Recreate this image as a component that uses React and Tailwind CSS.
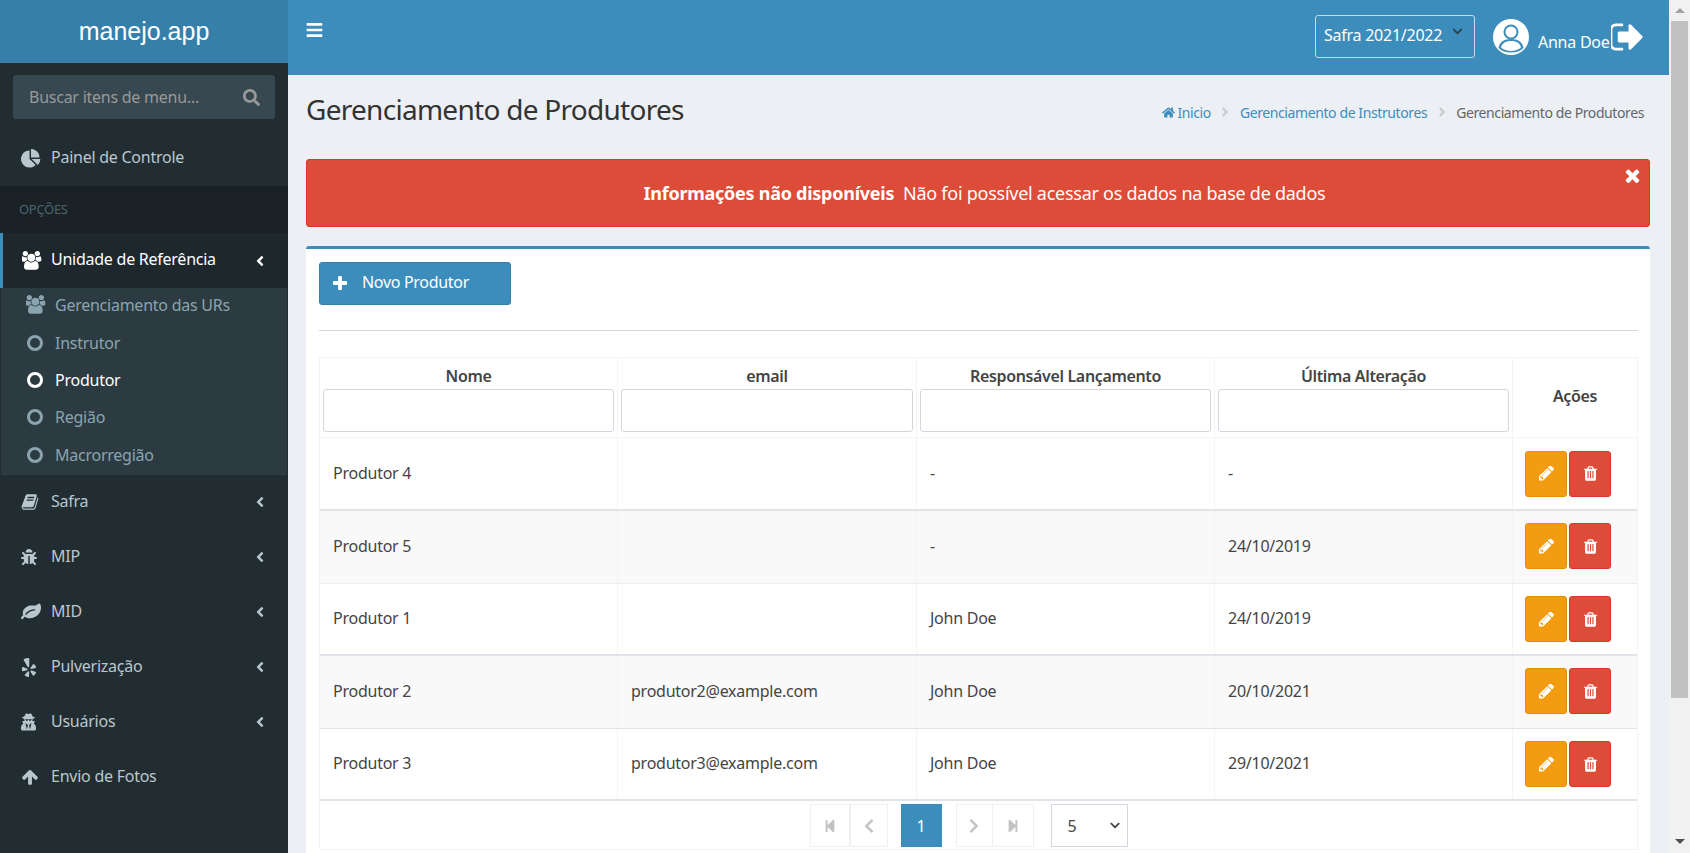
import React from "react";
import { FaBars, FaSearch, FaAngleLeft, FaBug, FaYelp, FaUserSecret, FaHome, FaAngleRight, FaChevronDown, FaChevronLeft, FaChevronRight, FaStepBackward, FaStepForward } from "react-icons/fa";

const FA = ({ d, className, box = "0 0 1792 1792" }) => (
  <svg viewBox={box} className={className} fill="currentColor"><path d={d} /></svg>
);
const bookD = "M1703 478q40 57 18 129l-275 906q-19 64-76.5 107.5t-122.5 43.5h-923q-77 0-148.5-53.5t-99.5-131.5q-24-67-2-127 0-4 3-27t4-37q1-8-3-21.5t-3-19.5q2-11 8-21t16.5-23.5 16.5-23.5q23-38 45-91.5t30-91.5q3-10 .5-30t-.5-28q3-11 17-28t17-23q21-36 42-92t25-90q1-9-2.5-32t.5-28q4-13 22-30.5t22-22.5q19-26 42.5-84.5t27.5-96.5q1-8-3-25.5t-2-26.5q2-8 9-18t18-23 17-21q8-12 16.5-30.5t15-35 16-36 19.5-32 26.5-23.5 36-11.5 47.5 5.5l-1 3q38-9 51-9h761q74 0 114 56t18 130l-274 906q-36 119-71.5 153.5t-128.5 34.5h-869q-27 0-38 15-11 16-1 43 24 70 144 70h923q29 0 56-15.5t35-41.5l300-987q7-22 5-57 38 15 59 43zm-1064 2q-4 13 2 22.5t20 9.5h608q13 0 25.5-9.5t16.5-22.5l21-64q4-13-2-22.5t-20-9.5h-608q-13 0-25.5 9.5t-16.5 22.5zm-83 256q-4 13 2 22.5t20 9.5h608q13 0 25.5-9.5t16.5-22.5l21-64q4-13-2-22.5t-20-9.5h-608q-13 0-25.5 9.5t-16.5 22.5z";
const leafD = "M1280 704q0-26-19-45t-45-19q-172 0-318 49.5t-259.5 134-235.5 219.5q-19 21-19 45 0 26 19 45t45 19q24 0 45-19 27-24 74-71t67-66q137-124 268.5-176t313.5-52q26 0 45-19t19-45zm512-198q0 95-20 193-46 224-184.5 383t-357.5 268q-214 108-438 108-148 0-286-47-15-5-88-42t-96-37q-16 0-39.5 32t-45 70-52.5 70-60 32q-43 0-63.5-17.5t-45.5-59.5q-2-4-6-11t-5.5-10-3-9.5-1.5-13.5q0-35 31-73.5t68-65.5 68-56 31-48q0-4-14-38t-16-44q-9-51-9-104 0-115 43.5-220t119-184.5 170.5-139 204-95.5q55-18 145-25.5t179.5-9 178.5-6 163.5-24 113.5-56.5l29.5-29.5 29.5-28 27-20 36.5-16 43.5-4.5q39 0 70.5 46t47.5 112 24 124 8 96z";
const trashD = "M704 1376v-704q0-14-9-23t-23-9h-64q-14 0-23 9t-9 23v704q0 14 9 23t23 9h64q14 0 23-9t9-23zm256 0v-704q0-14-9-23t-23-9h-64q-14 0-23 9t-9 23v704q0 14 9 23t23 9h64q14 0 23-9t9-23zm256 0v-704q0-14-9-23t-23-9h-64q-14 0-23 9t-9 23v704q0 14 9 23t23 9h64q14 0 23-9t9-23zm-544-992h448l-48-117q-7-9-17-11h-317q-10 2-17 11zm928 32v64q0 14-9 23t-23 9h-96v948q0 83-47 143.5t-113 60.5h-832q-66 0-113-58.5t-47-141.5v-952h-96q-14 0-23-9t-9-23v-64q0-14 9-23t23-9h309l70-167q15-37 54-63t79-26h320q40 0 79 26t54 63l70 167h309q14 0 23 9t9 23z";
const signOutD = "M704 1440q0 4 1 20t.5 26.5-3 23.5-10 19.5-20.5 6.5h-320q-119 0-203.5-84.5t-84.5-203.5v-704q0-119 84.5-203.5t203.5-84.5h320q13 0 22.5 9.5t9.5 22.5q0 4 1 20t.5 26.5-3 23.5-10 19.5-20.5 6.5h-320q-66 0-113 47t-47 113v704q0 66 47 113t113 47h312l11.5 1 11.5 3 8 5.5 7 9 2 13.5zm928-544q0 26-19 45l-544 544q-19 19-45 19t-45-19-19-45v-288h-448q-26 0-45-19t-19-45v-384q0-26 19-45t45-19h448v-288q0-26 19-45t45-19 45 19l544 544q19 19 19 45z";
const usersD = "M529 896q-162 5-265 128h-134q-82 0-138-40.500t-56-118.500q0-353 124-353 6 0 43.500 21t97.500 42.500 119 21.500q67 0 133-23-5 37-5 66 0 139 81 256zm1071 637q0 120-73 189.500t-194 69.500h-874q-121 0-194-69.500t-73-189.500q0-53 3.500-103.500t14-109 26.500-108.500 43-97.500 62-81 85.500-53.500 111.500-20q10 0 43 21.500t73 48 107 48 135 21.500 135-21.500 107-48 73-48 43-21.500q61 0 111.500 20t85.500 53.500 62 81 43 97.500 26.500 108.500 14 109 3.500 103.500zm-1024-1277q0 106-75 181t-181 75-181-75-75-181 75-181 181-75 181 75 75 181zm704 384q0 159-112.500 271.500t-271.500 112.500-271.500-112.500-112.500-271.500 112.500-271.500 271.500-112.500 271.500 112.500 112.500 271.500zm576 225q0 78-56 118.500t-138 40.500h-134q-103-123-265-128 81-117 81-256 0-29-5-66 66 23 133 23 59 0 119-21.500t97.500-42.500 43.500-21q124 0 124 353zm-128-609q0 106-75 181t-181 75-181-75-75-181 75-181 181-75 181 75 75 181z";
const pieD = "M768 890l546 546q-106 108-247.500 168t-298.500 60q-209 0-385.500-103t-279.500-279.500-103-385.500 103-385.500 279.500-279.500 385.500-103v762zm187 6h773q0 157-60 298.500t-168 247.500zm709-128h-768v-768q209 0 385.500 103t279.500 279.500 103 385.500z";
const arrowUpD = "M1675 971q0 51-37 90l-75 75q-38 38-91 38-54 0-90-38l-294-293v704q0 52-37.500 84.500t-90.500 32.500h-128q-53 0-90.500-32.500t-37.500-84.500v-704l-294 293q-36 38-90 38t-90-38l-75-75q-38-38-38-90 0-53 38-91l651-651q35-37 90-37 54 0 91 37l651 651q37 39 37 91z";
const timesD = "M1490 1322q0 40-28 68l-136 136q-28 28-68 28t-68-28l-294-294-294 294q-28 28-68 28t-68-28l-136-136q-28-28-28-68t28-68l294-294-294-294q-28-28-28-68t28-68l136-136q28-28 68-28t68 28l294 294 294-294q28-28 68-28t68 28l136 136q28 28 28 68t-28 68l-294 294 294 294q28 28 28 68z";
const plusD = "M1600 736v192q0 40-28 68t-68 28h-416v416q0 40-28 68t-68 28h-192q-40 0-68-28t-28-68v-416h-416q-40 0-68-28t-28-68v-192q0-40 28-68t68-28h416v-416q0-40 28-68t68-28h192q40 0 68 28t28 68v416h416q40 0 68 28t28 68z";
const pencilD = "M491 1536l91-91-235-235-91 91v107h128v128h107zm523-928q0-22-22-22-10 0-17 7l-542 542q-7 7-7 17 0 22 22 22 10 0 17-7l542-542q7-7 7-17zm-54-192l416 416-832 832h-416v-416zm683 96q0 53-37 90l-166 166-416-416 166-165q36-38 90-38 53 0 91 38l235 234q37 39 37 91z";

const MenuItem = ({ icon, label, arrow = true }) => (
  <div className="flex h-[55px] items-center pl-[21px] pr-[23px] text-[#b8c7ce]">
    <span className="flex w-[30px] shrink-0 items-center">{icon}</span>
    <span className="flex-1 pb-[3px] text-[16px] tracking-[-0.25px]">{label}</span>
    {arrow && <FaAngleLeft className="h-[16px] w-[10px]" />}
  </div>
);

const Sub = ({ label, active }) => (
  <div className={`flex h-[37.4px] items-center pb-[3px] pl-[26px] text-[16px] tracking-[-0.25px] ${active ? "text-white" : "text-[#8aa4af]"}`}>
    <span className={`box-border h-[16px] w-[16px] rounded-full border-[3px] ${active ? "border-white" : "border-[#8aa4af]"}`} />
    <span className="ml-[12px]">{label}</span>
  </div>
);

const Sidebar = () => (
  <aside className="flex h-full w-[288px] shrink-0 flex-col bg-[#222d32]">
    <div className="flex h-[63px] items-center justify-center bg-[#367fa9] font-['Liberation_Sans',sans-serif] text-[25px] text-white">manejo.app</div>
    <div className="px-[13px] pt-[12px]">
      <div className="flex h-[44px] items-center justify-between rounded-[3px] bg-[#374850] pl-[16px] pr-[15px] text-[16px] tracking-[-0.25px] text-[#999]">
        <span>Buscar itens de menu...</span>
        <FaSearch className="h-[17px] w-[17px]" />
      </div>
    </div>
    <div className="mt-[12px] flex h-[55px] items-center pl-[21px] text-[#b8c7ce]">
      <span className="w-[30px]"><FA d={pieD} className="h-[20px] w-[20px]" /></span>
      <span className="pb-[3px] text-[16px] tracking-[-0.25px]">Painel de Controle</span>
    </div>
    <div className="flex h-[47px] items-center bg-[#1a2226] pl-[19px] text-[13px] tracking-[-0.3px] text-[#4b646f]">OPÇÕES</div>
    <div className="flex h-[55px] items-center border-l-[3px] border-[#3c8dbc] bg-[#1e282c] pl-[19px] pr-[23px] text-white">
      <span className="w-[29px]"><FA d={usersD} box="0 128 1920 1664" className="h-[20px] w-[20px]" /></span>
      <span className="flex-1 pb-[3px] text-[16px] tracking-[-0.25px]">Unidade de Referência</span>
      <FaAngleLeft className="h-[16px] w-[10px]" />
    </div>
    <div className="mx-px bg-[#2c3b41]">
      <div className="flex h-[37.4px] items-center pb-[3px] pl-[25px] text-[16px] tracking-[-0.25px] text-[#8aa4af]">
        <FA d={usersD} box="0 128 1920 1664" className="h-[20px] w-[20px]" />
        <span className="ml-[9px]">Gerenciamento das URs</span>
      </div>
      <Sub label="Instrutor" />
      <Sub label="Produtor" active />
      <Sub label="Região" />
      <Sub label="Macrorregião" />
    </div>
    <MenuItem icon={<FA d={bookD} className="h-[18px] w-[18px]" />} label="Safra" />
    <MenuItem icon={<FaBug className="h-[16px] w-[16px]" />} label="MIP" />
    <MenuItem icon={<FA d={leafD} className="h-[20px] w-[20px]" />} label="MID" />
    <MenuItem icon={<FaYelp className="h-[19px] w-[16px]" />} label="Pulverização" />
    <MenuItem icon={<FaUserSecret className="h-[18px] w-[15px]" />} label="Usuários" />
    <MenuItem icon={<FA d={arrowUpD} className="h-[18px] w-[18px]" />} label="Envio de Fotos" arrow={false} />
  </aside>
);

const Header = () => (
  <header className="flex h-[75px] shrink-0 items-center bg-[#3c8dbc] pl-[18px] pr-[26px] text-white">
    <FaBars className="mb-[15px] h-[18px] w-[17px]" />
    <div className="flex-1" />
    <div className="mb-[3px] flex h-[43px] w-[160px] shrink-0 items-start justify-between rounded-[3px] border border-[#c9d9e4] pl-[8px] pr-[10px] pt-[7px] text-[16px] tracking-[-0.25px]">
      <span>Safra 2021/2022</span>
      <FaChevronDown className="mt-[3px] h-[11px] w-[13px] text-[#2f3f4a]" />
    </div>
    <svg viewBox="0 0 36 36" className="mb-[1px] ml-[18px] h-[36px] w-[36px] shrink-0">
      <circle cx="18" cy="18" r="18" fill="#fff" />
      <circle cx="18" cy="13" r="7.500" fill="#3c8dbc" />
      <circle cx="18" cy="13" r="5.500" fill="#fff" />
      <path d="M5.500 29c1-6 5.500-9 12.500-9s11.500 3 12.500 9c-3 3-7.500 4.500-12.500 4.500s-9.500-1.500-12.500-4.500z" fill="#3c8dbc" />
      <path d="M8 28.500c1-4 4-6.500 10-6.500s9 2.500 10 6.500c-2.500 2-6 3.500-10 3.500s-7.500-1.500-10-3.500z" fill="#fff" />
    </svg>
    <span className="ml-[9px] mt-[8px] w-[73px] shrink-0 text-[16px] tracking-[-0.25px]">Anna Doe</span>
    <FA d={signOutD} box="128 230 1520 1332" className="mb-[2px] h-[28px] w-[32px] shrink-0" />
  </header>
);

const rows = [
  ["Produtor 4", "", "-", "-", false, "h-[73px]", "border-b-2 border-[#e0e4e9]", ""],
  ["Produtor 5", "", "-", "24/10/2019", true, "h-[73px]", "border-b border-[#ecedf0]", "pb-[2px]"],
  ["Produtor 1", "", "John Doe", "24/10/2019", false, "h-[72px]", "border-b-2 border-[#e0e4e9]", ""],
  ["Produtor 2", "produtor2@example.com", "John Doe", "20/10/2021", true, "h-[73px]", "border-b border-[#e0e4e9]", "pb-[2px]"],
  ["Produtor 3", "produtor3@example.com", "John Doe", "29/10/2021", false, "h-[72px]", "border-b-2 border-[#e0e4e9]", ""],
];

const cols = "grid grid-cols-[298px_299px_298px_298px_1fr]";

const Head = ({ label }) => (
  <div className="flex flex-col items-center border-r border-[#f4f4f4] px-[3px]">
    <div className="mt-[6px] h-[25px] text-[16px] font-semibold tracking-[-0.35px] text-[#444]">{label}</div>
    <div className="h-[43px] w-full rounded-[3px] border border-[#d2d6de] bg-white" />
  </div>
);

const Table = () => (
  <div className="mt-[26px] border-x border-[#f4f4f4]">
    <div className={`${cols} h-[81px] border-y border-[#f4f4f4]`}>
      <Head label="Nome" />
      <Head label="email" />
      <Head label="Responsável Lançamento" />
      <Head label="Última Alteração" />
      <div className="flex items-center justify-center pb-[3px] text-[16px] font-semibold tracking-[-0.35px] text-[#444]">Ações</div>
    </div>
    {rows.map((r) => (
      <div key={r[0]} className={`${cols} ${r[5]} ${r[6]} ${r[4] ? "bg-[#f9f9f9]" : "bg-white"} text-[16px] tracking-[-0.25px] text-[#444]`}>
        {[r[0], r[1], r[2], r[3]].map((c, i) => (
          <div key={i} className="flex items-center border-r border-[#f4f4f4] pb-[2px] pl-[13px]">{c}</div>
        ))}
        <div className={`flex items-center pl-[12px] ${r[7]}`}>
          <div className="flex h-[46px] w-[42px] items-center justify-center rounded-[3px] border border-[#e08e0b] bg-[#f39c12] text-white"><FA d={pencilD} box="128 200 1516 1516" className="h-[15px] w-[15px]" /></div>
          <div className="ml-[2px] flex h-[46px] w-[42px] items-center justify-center rounded-[3px] border border-[#d73925] bg-[#dd4b39] text-white"><FA d={trashD} className="h-[17px] w-[17px]" /></div>
        </div>
      </div>
    ))}
    <div className="flex h-[49px] items-center justify-center border-b border-[#f4f4f4] pt-[1px]">
      <div className="mr-[20px] flex h-[43px] text-[#c3c3c3]">
        <div className="flex w-[41px] items-center justify-center border border-r-2 border-[#f0f0f3]"><FaStepBackward className="h-[14px] w-[14px]" /></div>
        <div className="flex w-[37px] items-center justify-center border border-l-0 border-[#f0f0f3]"><FaChevronLeft className="h-[16px] w-[16px]" /></div>
        <div className="ml-[13px] flex w-[41px] items-center justify-center bg-[#3c8dbc] text-[16px] text-white">1</div>
        <div className="ml-[14px] flex w-[37px] items-center justify-center border border-[#f0f0f3]"><FaChevronRight className="h-[16px] w-[16px]" /></div>
        <div className="flex w-[41px] items-center justify-center border border-l-0 border-[#f0f0f3]"><FaStepForward className="h-[14px] w-[14px]" /></div>
        <div className="ml-[17px] flex w-[77px] items-center justify-between border border-[#d2d6de] pl-[16px] pr-[5px] text-[16px] text-[#444]">
          <span>5</span>
          <FaChevronDown className="h-[11px] w-[14px] text-[#444]" />
        </div>
      </div>
    </div>
  </div>
);

const Crumbs = () => (
  <div className="mr-[6px] mt-[27px] flex h-[20px] items-center text-[14px] tracking-[-0.4px]">
    <FaHome className="h-[13px] w-[13px] text-[#3c8dbc]" />
    <span className="ml-[2px] text-[#3c8dbc]">Inicio</span>
    <FaAngleRight className="mx-[10.500px] h-[14px] w-[8px] text-[#c9c9c9]" />
    <span className="text-[#3c8dbc]">Gerenciamento de Instrutores</span>
    <FaAngleRight className="mx-[10.500px] h-[14px] w-[8px] text-[#c9c9c9]" />
    <span className="text-[#666]">Gerenciamento de Produtores</span>
  </div>
);

const Scrollbar = () => (
  <div className="h-full w-[21px] shrink-0 bg-[#f1f1f1] pl-[2px]">
    <div className="flex h-full w-[17px] flex-col items-center">
      <div className="mt-[8px] h-0 w-0 border-x-[5px] border-b-[5px] border-x-transparent border-b-[#a3a3a3]" />
      <div className="mt-[8px] h-[677px] w-[17px] bg-[#c1c1c1]" />
      <div className="flex-1" />
      <div className="mb-[9px] h-0 w-0 border-x-[5px] border-t-[5px] border-x-transparent border-t-[#505050]" />
    </div>
  </div>
);

export default function App() {
  return (
    <div className="flex h-[853px] w-full overflow-hidden bg-[#ecf0f5] font-['Noto_Sans',sans-serif]">
      <Sidebar />
      <div className="flex min-w-0 flex-1 flex-col">
        <Header />
        <main className="flex flex-1 flex-col overflow-hidden pl-[18px] pr-[19px]">
          <div className="flex h-[84px] shrink-0 items-start justify-between">
            <h1 className="mt-[14px] text-[28px] leading-[40px] tracking-[-0.72px] text-[#333]">Gerenciamento de Produtores</h1>
            <Crumbs />
          </div>
          <div className="relative flex h-[68px] shrink-0 items-center justify-center rounded-[3px] border border-[#d73925] bg-[#dd4b39] pl-[13px] text-[18px] tracking-[-0.26px] text-white">
            <span><b className="font-bold">Informações não disponíveis</b> &nbsp;Não foi possível acessar os dados na base de dados</span>
            <FA d={timesD} box="302 238 1188 1316" className="absolute right-[9px] top-[8px] h-[15px] w-[15px]" />
          </div>
          <section className="mt-[19px] flex-1 rounded-t-[3px] border-t-[3px] border-[#3c8dbc] bg-white pl-[13px] pr-[12px] pt-[13px]">
            <div className="flex h-[43px] w-[192px] items-center rounded-[3px] border border-[#367fa9] bg-[#3c8dbc] pl-[13px] text-[16px] tracking-[-0.3px] text-white">
              <FA d={plusD} box="192 128 1408 1408" className="mb-[1px] h-[14px] w-[14px]" />
              <span className="ml-[15px] pb-[3px]">Novo Produtor</span>
            </div>
            <div className="mt-[25px] h-px bg-[#d2d6de]" />
            <Table />
          </section>
        </main>
      </div>
      <Scrollbar />
    </div>
  );
}
